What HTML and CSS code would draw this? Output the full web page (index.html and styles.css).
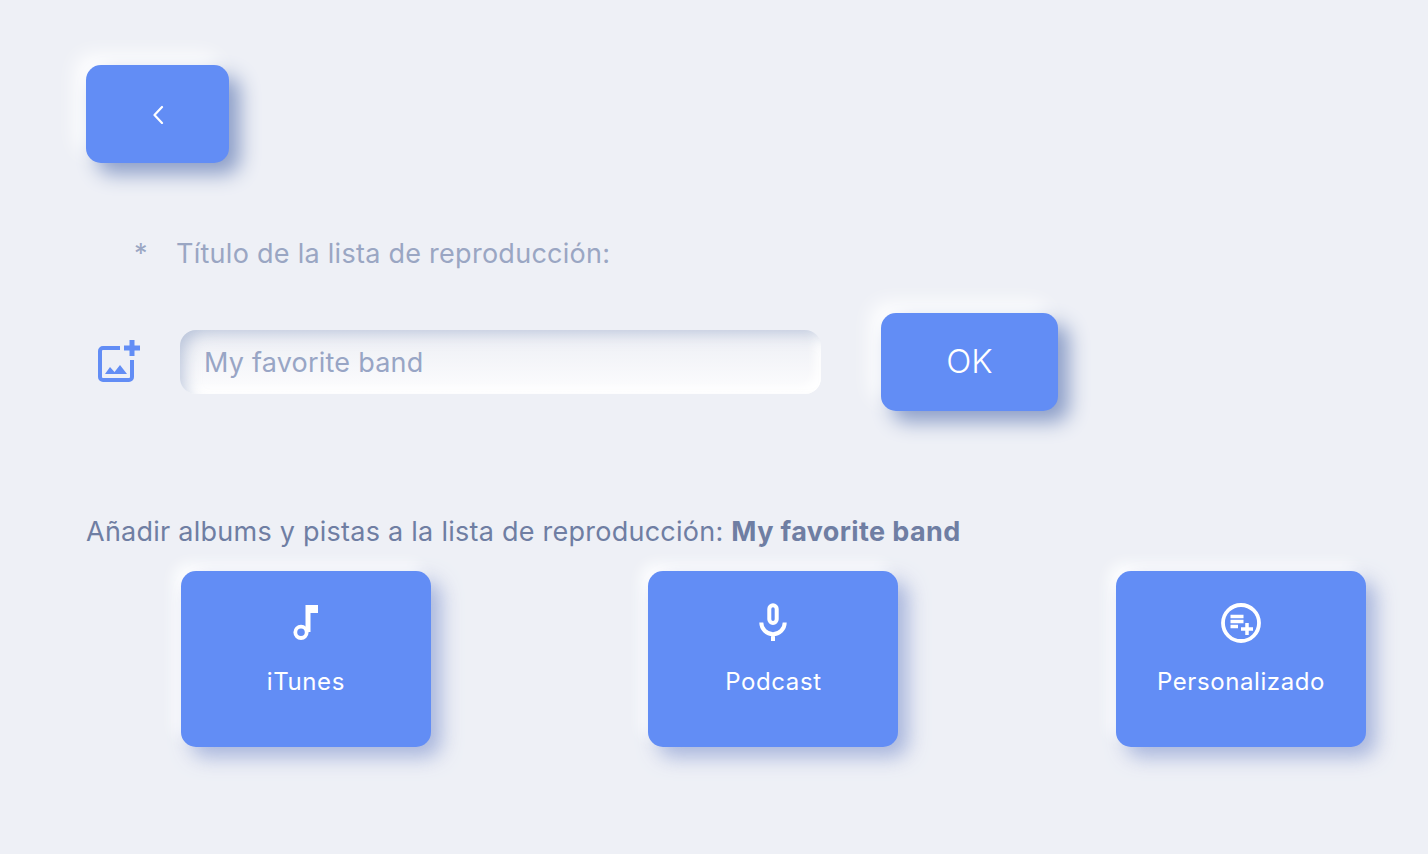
FILE: index.html
```html
<!DOCTYPE html>
<html lang="es">
<head>
<meta charset="utf-8">
<title>Lista de reproducción</title>
<link rel="stylesheet" href="styles.css">
</head>
<body>
<main class="page">
  <button class="btn back" aria-label="Volver">
    <svg class="chev" viewBox="0 0 12 20" width="12" height="20"><path d="M10 3 2.500 11l7.500 8" fill="none" stroke="#fff" stroke-width="2.200" stroke-linecap="round" stroke-linejoin="round"/></svg>
  </button>
  <div class="label"><span class="star">*</span><span>Título de la lista de reproducción:</span></div>
  <div class="form-row">
    <svg class="add-img" viewBox="0 0 44 44" width="44" height="44">
      <path d="M22 8H5a3 3 0 0 0-3 3v26a3 3 0 0 0 3 3h26a3 3 0 0 0 3-3V20" fill="none" stroke="#628df5" stroke-width="4"/>
      <path d="M34 0v16M26 8h16" fill="none" stroke="#628df5" stroke-width="5"/>
      <path d="M7 34l5-7 4.500 5 5.500-7 7 9z" fill="#628df5"/>
    </svg>
    <div class="input">My favorite band</div>
    <button class="btn ok">OK</button>
  </div>
  <p class="heading">Añadir albums y pistas a la lista de reproducción: <strong>My favorite band</strong></p>
  <div class="cards">
    <button class="btn card">
      <svg viewBox="0 0 40 40" width="40" height="40"><path d="M19.500 2H32V10H24.500V29H19.500Z" fill="#fff"/><circle cx="15" cy="29.300" r="5.700" fill="none" stroke="#fff" stroke-width="3.800"/></svg>
      <span>iTunes</span>
    </button>
    <button class="btn card">
      <svg viewBox="0 0 40 40" width="40" height="40"><rect x="16.300" y="2.300" width="7.400" height="17.700" rx="3.700" fill="none" stroke="#fff" stroke-width="4"/><path d="M8.300 19.500a11.700 11.700 0 0 0 23.400 0M20 31v7" fill="none" stroke="#fff" stroke-width="4"/></svg>
      <span>Podcast</span>
    </button>
    <button class="btn card">
      <svg viewBox="0 0 40 40" width="40" height="40"><circle cx="20" cy="20" r="18" fill="none" stroke="#fff" stroke-width="3.800"/><path d="M9.500 13.500h13M9.500 18.500h13M9.500 23.500h7.500M20 26h12M26 20v12" fill="none" stroke="#fff" stroke-width="3.500"/></svg>
      <span>Personalizado</span>
    </button>
  </div>
</main>
</body>
</html>
```
FILE: styles.css
```css
* { box-sizing: border-box; }
html, body { margin: 0; height: 100%; }
body { background: #eef0f6; font-family: Inter, "Liberation Sans", sans-serif; overflow: hidden; }
.page { height: 854px; padding: 65px 62px 0 86px; display: flex; flex-direction: column; align-items: flex-start; }
.btn {
  border: 0; padding: 0; background: #628df5; color: #fff; font-family: inherit;
  border-radius: 15px;
  box-shadow: 11px 11px 20px rgba(140, 158, 200, 1), -10px -10px 20px #fff;
  display: flex; align-items: center; justify-content: center;
}
.back { width: 143px; height: 98px; }
.label { margin: 73px 0 0 48px; display: flex; gap: 28px; font-size: 27px; line-height: 36px; color: #9aa6c3; letter-spacing: 0.27px; }
.star { width: 14px; }
.form-row { margin: 41px 0 0 12px; display: flex; align-items: center; }
.add-img { flex: none; margin-right: 38px; }
.input {
  width: 641px; height: 64px; border-radius: 16px; padding-left: 24px;
  display: flex; align-items: center; font-size: 27px; color: #98a5c5; letter-spacing: 0.22px;
  background: linear-gradient(180deg, #eceef4, #fdfdfe);
  box-shadow: inset 10px 8px 16px -6px rgba(150, 166, 200, 0.6), inset -6px -6px 10px rgba(255, 255, 255, 0.9);
}
.ok { width: 177px; height: 98px; margin-left: 60px; padding-bottom: 2px; font-size: 33px; font-weight: 300; }
.heading { margin: 103px 0 0; font-size: 27px; line-height: 36px; color: #6f7ea3; letter-spacing: 0.25px; }
.heading strong { font-weight: 700; letter-spacing: 0.38px; }
.cards { align-self: stretch; margin: 21px 0 0 94.9px; display: flex; justify-content: space-between; }
.card {
  width: 250px; height: 176px; flex-direction: column; justify-content: flex-start; padding-top: 32px;
  gap: 24px; font-size: 24px; line-height: 30px; letter-spacing: 0.6px; font-weight: 400;
  box-shadow: 10px 10px 20px rgba(150, 166, 214, 0.8), -7px -7px 14px #fff;
}
```
